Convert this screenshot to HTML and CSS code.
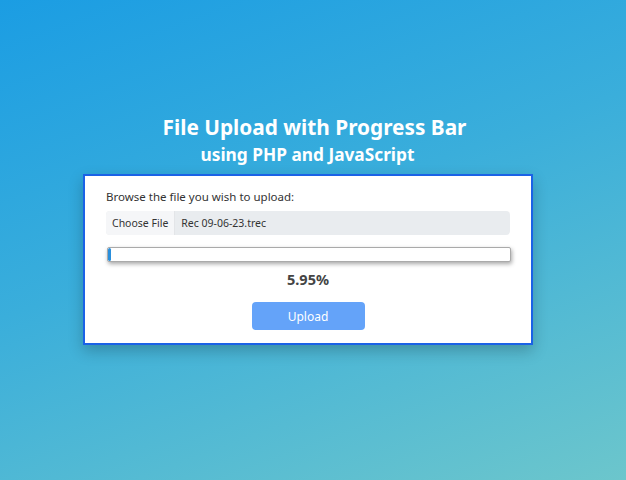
FILE: index.html
```html
<!DOCTYPE html>
<html>
<head>
<meta charset="utf-8">
<link rel="stylesheet" href="styles.css">
</head>
<body>
<div class="page">
  <h1 class="title">File Upload with Progress Bar</h1>
  <h2 class="subtitle">using PHP and JavaScript</h2>
  <div class="card">
    <div class="label">Browse the file you wish to upload:</div>
    <div class="file">
      <span class="choose">Choose File</span>
      <span class="fname">Rec 09-06-23.trec</span>
    </div>
    <div class="progress"><div class="fill"></div></div>
    <div class="percent">5.95%</div>
    <div class="actions"><button class="upload">Upload</button></div>
  </div>
</div>
</body>
</html>
```
FILE: styles.css
```css
html, body {
  margin: 0;
  padding: 0;
}
body {
  width: 626px;
  height: 480px;
  overflow: hidden;
  background: linear-gradient(160deg, #1b9de3 0%, #3aaedb 45%, #6cc6cc 100%);
  font-family: "Noto Sans", "Open Sans", sans-serif;
}
.page {
  display: flex;
  flex-direction: column;
  align-items: center;
  padding-top: 113px;
}
.title {
  margin: 0;
  color: #fff;
  font-size: 20.8px;
  font-weight: 700;
  line-height: 28px;
  padding-left: 3px;
}
.subtitle {
  margin: 2px 11px 0 0;
  color: #fff;
  font-size: 17.3px;
  font-weight: 700;
  line-height: 23px;
}
.card {
  box-sizing: border-box;
  width: 450px;
  margin-top: 8px;
  margin-right: 10px;
  background: #fff;
  border: 2px solid #1b62e6;
  box-shadow: 0 6px 14px rgba(0, 0, 0, 0.22);
  padding: 13px 21px 13px 21px;
  color: #333;
}
.label {
  font-size: 11.5px;
  line-height: 16px;
  color: #333;
}
.file {
  display: flex;
  height: 24px;
  margin-top: 6px;
  background: #e9ecef;
  border-radius: 4px;
  overflow: hidden;
  font-size: 10.5px;
  align-items: stretch;
}
.choose {
  display: flex;
  align-items: center;
  padding: 0 6px;
  background: #f5f6f8;
  border-right: 1px solid #e3e5e8;
  color: #333;
}
.fname {
  display: flex;
  align-items: center;
  padding-left: 6px;
  color: #333;
}
.progress {
  height: 13px;
  margin-top: 12px;
  margin-left: 1px;
  margin-right: -1px;
  background: #fff;
  border: 1px solid #aaa;
  border-radius: 2px;
  box-shadow: 1px 2px 4px rgba(0, 0, 0, 0.35);
  overflow: hidden;
}
.fill {
  width: 3px;
  height: 100%;
  background: #2a8fdc;
  border-radius: 2px;
}
.percent {
  text-align: center;
  margin-top: 8px;
  font-size: 14.5px;
  font-weight: 700;
  line-height: 18px;
  color: #444;
}
.actions {
  display: flex;
  justify-content: center;
  margin-top: 14px;
}
.upload {
  width: 113px;
  height: 28px;
  border: none;
  border-radius: 4px;
  background: #64a3f9;
  color: #fff;
  font-family: inherit;
  font-size: 12px;
}
```
